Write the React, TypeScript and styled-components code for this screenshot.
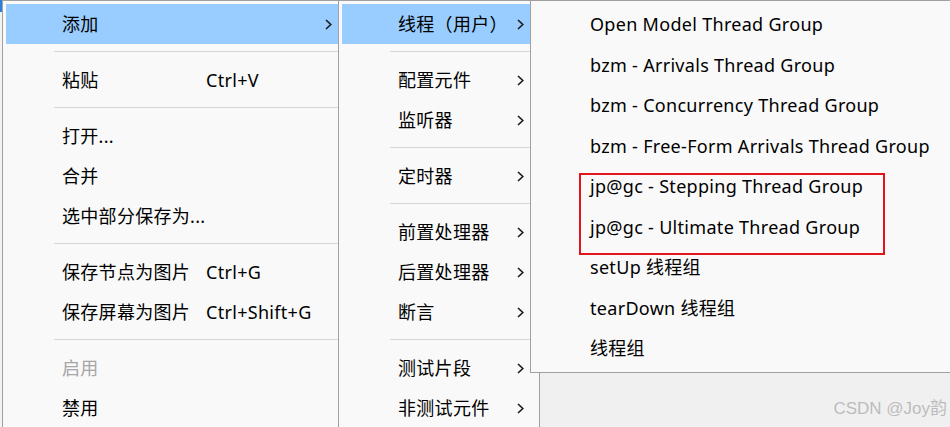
import React from "react";
import styled, { createGlobalStyle } from "styled-components";

type Entry =
  | {
      kind: "item";
      label: string;
      shortcut?: string;
      sub?: boolean;
      active?: boolean;
      disabled?: boolean;
    }
  | { kind: "sep" };

const mainMenu: Entry[] = [
  { kind: "item", label: "添加", sub: true, active: true },
  { kind: "sep" },
  { kind: "item", label: "粘贴", shortcut: "Ctrl+V" },
  { kind: "sep" },
  { kind: "item", label: "打开..." },
  { kind: "item", label: "合并" },
  { kind: "item", label: "选中部分保存为..." },
  { kind: "sep" },
  { kind: "item", label: "保存节点为图片", shortcut: "Ctrl+G" },
  { kind: "item", label: "保存屏幕为图片", shortcut: "Ctrl+Shift+G" },
  { kind: "sep" },
  { kind: "item", label: "启用", disabled: true },
  { kind: "item", label: "禁用" },
];

const addMenu: Entry[] = [
  { kind: "item", label: "线程（用户）", sub: true, active: true },
  { kind: "sep" },
  { kind: "item", label: "配置元件", sub: true },
  { kind: "item", label: "监听器", sub: true },
  { kind: "sep" },
  { kind: "item", label: "定时器", sub: true },
  { kind: "sep" },
  { kind: "item", label: "前置处理器", sub: true },
  { kind: "item", label: "后置处理器", sub: true },
  { kind: "item", label: "断言", sub: true },
  { kind: "sep" },
  { kind: "item", label: "测试片段", sub: true },
  { kind: "item", label: "非测试元件", sub: true },
];

const threadMenu: string[] = [
  "Open Model Thread Group",
  "bzm - Arrivals Thread Group",
  "bzm - Concurrency Thread Group",
  "bzm - Free-Form Arrivals Thread Group",
  "jp@gc - Stepping Thread Group",
  "jp@gc - Ultimate Thread Group",
  "setUp 线程组",
  "tearDown 线程组",
  "线程组",
];

const GlobalStyle = createGlobalStyle`
  html, body {
    margin: 0;
    padding: 0;
    background: #f0f0f0;
    overflow: hidden;
  }
  body {
    font-family: "Noto Sans", "Noto Sans CJK SC", sans-serif;
  }
`;

const Screen = styled.div`
  position: relative;
  width: 950px;
  height: 427px;
  display: flex;
  align-items: flex-start;
  overflow: hidden;
  background: #f0f0f0;
`;

const Edge = styled.div`
  flex: none;
  width: 2px;
  height: 427px;
  background: linear-gradient(#2b7fd8 0 12px, #f3f3f3 12px);
`;

const Menu = styled.div<{ $width: number; $overlap?: number; $z: number }>`
  position: relative;
  z-index: ${({ $z }) => $z};
  flex: none;
  box-sizing: border-box;
  width: ${({ $width }) => $width}px;
  margin-left: ${({ $overlap }) => ($overlap ? -$overlap : 0)}px;
  padding: 3px;
  background: #f9f9f9;
  border: 1px solid #a0a0a0;
  display: flex;
  flex-direction: column;
`;

const Row = styled.div<{ $active?: boolean; $disabled?: boolean; $h?: number }>`
  display: flex;
  align-items: center;
  height: ${({ $h }) => $h ?? 40}px;
  padding: 0 12px 0 56px;
  font-size: 18px;
  line-height: 1;
  letter-spacing: 0.3px;
  white-space: nowrap;
  background: ${({ $active }) => ($active ? "#99ccff" : "transparent")};
  color: ${({ $disabled }) => ($disabled ? "#a6a6a6" : "#000")};
`;

const Label = styled.span<{ $fixed?: boolean }>`
  flex: ${({ $fixed }) => ($fixed ? "0 0 144px" : "1")};
`;

const Shortcut = styled.span`
  flex: 1;
`;

const Separator = styled.div`
  height: 16px;
  margin-left: 48px;
  display: flex;
  flex-direction: column;
  &::after {
    content: "";
    margin-top: 7px;
    height: 1px;
    background: #d6d6d6;
  }
`;

const Chevron = styled.svg`
  flex: none;
  width: 7px;
  height: 11px;
`;

const Annotation = styled.div`
  position: absolute;
  left: 48px;
  top: 172px;
  width: 306px;
  height: 82px;
  box-sizing: border-box;
  border: 2px solid #e3141c;
  pointer-events: none;
`;

const Watermark = styled.div`
  position: absolute;
  right: 3px;
  bottom: 8px;
  font-family: "Liberation Sans", "Noto Sans CJK SC", sans-serif;
  font-size: 17px;
  color: rgba(170, 170, 170, 0.75);
  z-index: 5;
`;

const Arrow = () => (
  <Chevron viewBox="0 0 7 11">
    <polyline
      points="1,1 5.8,5.5 1,10"
      fill="none"
      stroke="#1b1b1b"
      strokeWidth="1.6"
    />
  </Chevron>
);

const renderEntries = (entries: Entry[]) =>
  entries.map((e, i) =>
    e.kind === "sep" ? (
      <Separator key={i} />
    ) : (
      <Row key={i} $active={e.active} $disabled={e.disabled}>
        <Label $fixed={!!e.shortcut}>{e.label}</Label>
        {e.shortcut && <Shortcut>{e.shortcut}</Shortcut>}
        {e.sub && <Arrow />}
      </Row>
    )
  );

export default function App() {
  return (
    <>
      <GlobalStyle />
      <Screen>
        <Edge />
        <Menu $width={346} $z={1}>
          {renderEntries(mainMenu)}
        </Menu>
        <Menu $width={202} $overlap={10} $z={2}>
          {renderEntries(addMenu)}
        </Menu>
        <Menu $width={440} $overlap={10} $z={3}>
          {threadMenu.map((t) => (
            <Row key={t} $h={40.5}>
              <Label>{t}</Label>
            </Row>
          ))}
          <Annotation />
        </Menu>
        <Watermark>CSDN @Joy韵</Watermark>
      </Screen>
    </>
  );
}
